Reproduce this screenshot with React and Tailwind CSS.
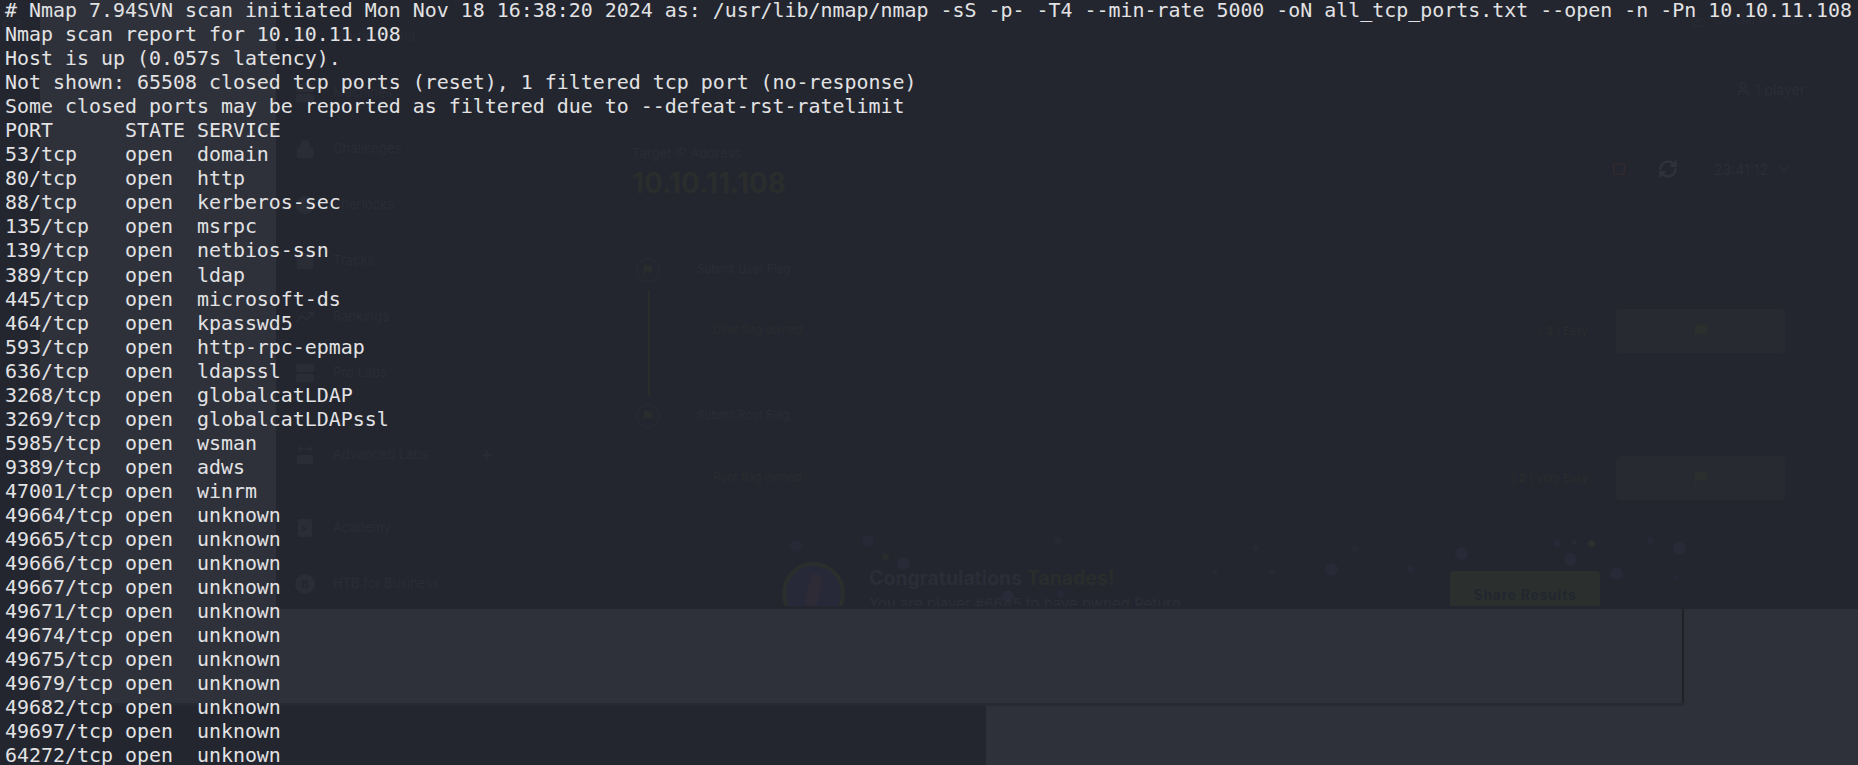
import React from 'react';
import { ChevronDown, Circle, Download, Flag, Lock, Plus, RefreshCw, Server, Square, TrendingUp, User } from 'lucide-react';

const header = [
    '# Nmap 7.94SVN scan initiated Mon Nov 18 16:38:20 2024 as: /usr/lib/nmap/nmap -sS -p- -T4 --min-rate 5000 -oN all_tcp_ports.txt --open -n -Pn 10.10.11.108',
    'Nmap scan report for 10.10.11.108',
    'Host is up (0.057s latency).',
    'Not shown: 65508 closed tcp ports (reset), 1 filtered tcp port (no-response)',
    'Some closed ports may be reported as filtered due to --defeat-rst-ratelimit',
    'PORT      STATE SERVICE',
];

const ports = [
    ['53', 'domain'], ['80', 'http'], ['88', 'kerberos-sec'], ['135', 'msrpc'], ['139', 'netbios-ssn'],
    ['389', 'ldap'], ['445', 'microsoft-ds'], ['464', 'kpasswd5'], ['593', 'http-rpc-epmap'], ['636', 'ldapssl'],
    ['3268', 'globalcatLDAP'], ['3269', 'globalcatLDAPssl'], ['5985', 'wsman'], ['9389', 'adws'], ['47001', 'winrm'],
    ['49664', 'unknown'], ['49665', 'unknown'], ['49666', 'unknown'], ['49667', 'unknown'], ['49671', 'unknown'],
    ['49674', 'unknown'], ['49675', 'unknown'], ['49679', 'unknown'], ['49682', 'unknown'], ['49697', 'unknown'],
    ['64272', 'unknown'],
];

const lines = [...header, ...ports.map(([port, name]) => `${(port + '/tcp').padEnd(9)} open  ${name}`)];

const navTop = [
    { label: 'Starting Point', icon: Flag },
    { label: 'Machines', icon: Server },
    { label: 'Challenges', icon: Lock },
    { label: 'Sherlocks', icon: Circle },
    { label: 'Tracks', icon: Square },
    { label: 'Rankings', icon: TrendingUp, outline: true },
    { label: 'Pro Labs', icon: Server },
];

// confetti pieces, x and y are relative to the congratulations row
const confetti = [
    [164, 26, 12, '#272936'], [236, 21, 12, '#272936'], [253, 36, 7, '#292c2d'], [271, 43, 13, '#282a38'],
    [375, 76, 13, '#282a38'], [428, 74, 7, '#272936'], [426, 21, 8, '#262834'], [623, 27, 7, '#262834'],
    [722, 28, 7, '#262834'], [699, 49, 13, '#282a38'], [778, 49, 7, '#272936'], [640, 52, 6, '#262834'],
    [583, 52, 5, '#262834'], [829, 33, 13, '#282a38'], [925, 23, 7, '#282a38'], [942, 22, 5, '#282a38'],
    [959, 23, 7, '#2c302e'], [938, 39, 13, '#282a38'], [984, 53, 13, '#282a38'], [1018, 20, 7, '#272936'],
    [1047, 28, 13, '#282a38'], [1043, 57, 5, '#272936'],
];

const FlagStep = ({ title, owned, points, level, first }) => (
    <div>
        <div className="flex h-6 items-center">
            <div className="ml-1 flex h-6 w-6 items-center justify-center rounded-full border border-[#292c32]">
                <Flag className="h-3 w-3 fill-[#2a2d2d] text-[#2a2d2d]" />
            </div>
            <span className="ml-[37px] text-[11.5px] text-[#2a2c37]">{title}</span>
        </div>
        <div className="flex">
            <div className="ml-[16px] w-[2px]">
                {first && <div className="my-2 h-[106px] w-[2px] bg-[#2a2d2c]" />}
            </div>
            <div className={first ? 'ml-[63px] mt-[27px] flex h-[44px] flex-1 items-center pr-[73px]' : 'ml-[63px] mt-[28px] flex h-[44px] flex-1 items-center pr-[73px]'}>
                <span className="text-[11.5px] text-[#2a2c2e]">{owned}</span>
                <span className="ml-auto text-[11px] text-[#2a2d2c]">[ <b>{points}</b> ] {level}</span>
                <div className="ml-[28px] flex h-[44px] w-[169px] items-center justify-center rounded bg-[#272a31]">
                    <Flag className="h-4 w-4 fill-[#2b2f2d] text-[#2b2f2d]" />
                </div>
            </div>
        </div>
    </div>
);

export default function App() {
    return (
        <div className="relative flex h-[765px] w-[1858px] flex-col overflow-hidden bg-[#2e313a] font-['Inter',sans-serif]">
            {/* dimmed browser page behind the terminal */}
            <div className="flex h-[609px]">
                <div className="w-[40px] bg-[#23262f] pl-[2px] pt-[15px] text-[14px] text-[#292b35]">6.3</div>
                <div className="w-[236px]" />
                <div className="flex flex-1 bg-[#23262f]">
                    <nav className="w-[356px] pl-[19px] pt-[9px] text-[13px] text-[#2a2c36]">
                        {navTop.map(({ label, icon: Icon, outline }) => (
                            <div key={label} className="flex h-14 items-center">
                                <Icon className={outline ? 'h-5 w-5 text-[#2a2c36]' : 'h-5 w-5 fill-[#2a2c36] text-[#2a2c36]'} />
                                <span className="ml-[18px]">{label}</span>
                            </div>
                        ))}
                        <div className="mt-[26px] flex h-14 items-center">
                            <svg className="h-5 w-5" viewBox="0 0 20 20" fill="currentColor">
                                <path d="M3 4h14M3 4l3-2.5M3 4l3 2.5M17 4l-3-2.5M17 4l-3 2.5" stroke="currentColor" strokeWidth="1.6" fill="none" />
                                <rect x="2" y="10" width="16" height="9" rx="1.5" />
                            </svg>
                            <span className="ml-[18px]">Advanced Labs</span>
                            <Plus className="ml-[51px] h-4 w-4" />
                        </div>
                        <div className="mt-[17px] flex h-14 items-center">
                            <svg className="h-5 w-5" viewBox="0 0 20 20" fill="currentColor">
                                <rect x="3" y="1" width="14" height="18" rx="2" />
                                <path d="M7 8l3 2.5L7 13" stroke="#23262f" strokeWidth="1.5" fill="none" />
                            </svg>
                            <span className="ml-[18px]">Academy</span>
                        </div>
                        <div className="flex h-14 items-center">
                            <div className="flex h-5 w-5 items-center justify-center rounded-full bg-[#2a2c36] text-[10px] font-bold text-[#23262f]">B</div>
                            <span className="ml-[18px]">HTB for Business</span>
                        </div>
                    </nav>

                    <main className="flex-1">
                        <div className="flex h-10 items-center justify-end pr-[56px] text-[12px] text-[#282a34]">
                            <Download className="mr-2 h-4 w-4" />
                            Official Writeup
                        </div>
                        <div className="mt-[29px] flex h-10 items-center justify-end pr-[53px] text-[14px] text-[#2b2d37]">
                            <User className="mr-1 h-4 w-4" />
                            1 player
                        </div>
                        <div className="mt-[31px] flex h-[58px] items-center">
                            <div>
                                <div className="flex h-7 items-center text-[13px] text-[#2a2c36]">Target IP Address</div>
                                <div className="flex h-[30px] items-center text-[28px] font-bold text-[#2a2d2c]">10.10.11.108</div>
                            </div>
                            <Square className="ml-auto h-[14px] w-[14px] text-[#3a2a2f]" />
                            <RefreshCw className="ml-[32px] h-5 w-5 text-[#2f323a]" strokeWidth={3} />
                            <span className="ml-[36px] text-[14px] text-[#2b2d37]">23:41:12</span>
                            <ChevronDown className="ml-2 mr-[66px] h-4 w-4 text-[#2b2d37]" />
                        </div>
                        <div className="mt-[60px]">
                            <FlagStep title="Submit User Flag" owned="User flag owned" points="3" level="Easy" first />
                            <FlagStep title="Submit Root Flag" owned="Root flag owned" points="2" level="Very Easy" />
                        </div>
                        <div className="relative mt-[20px] flex h-[86px] overflow-hidden pl-[150px] pt-[42px]">
                            {confetti.map(([x, y, size, color], i) => (
                                <span
                                    key={i}
                                    className="absolute rounded-full"
                                    style={{ left: x - size / 2, top: y - size / 2, width: size, height: size, background: color }}
                                />
                            ))}
                            <div className="relative h-[63px] w-[63px] shrink-0 rounded-full border-[4px] border-[#2a2e2c] bg-[#282938]">
                                <div className="mx-auto mt-2 h-8 w-3 rotate-12 rounded bg-[#2f2b36]" />
                            </div>
                            <div className="relative ml-6">
                                <div className="mt-[2px] flex h-7 items-center text-[19.5px] font-bold leading-7 text-[#2b2d37]">
                                    Congratulations&nbsp;<span className="text-[#2a2d2c]">Tanades!</span>
                                </div>
                                <div className="mt-[2px] text-[15px] leading-5 text-[#2c2e38]">You are player #6645 to have pwned Return</div>
                            </div>
                            <div className="relative ml-auto mr-[258px] mt-[9px] flex h-[50px] w-[150px] justify-center rounded bg-[#2b302e] pt-[13px] text-[14px] font-bold tracking-wider text-[#23262f]">
                                Share Results
                            </div>
                        </div>
                    </main>
                </div>
            </div>

            <div className="flex h-[94px]">
                <div className="w-[40px] bg-[#23262f]" />
                <div className="relative w-[1644px] border-r-2 border-[#1f2229] shadow-[0_3px_0_#272a33]" />
            </div>

            <div className="flex flex-1">
                <div className="w-[986px] bg-[#23262f]" />
            </div>

            {/* terminal floats on top of the page */}
            <pre className="absolute inset-x-0 -top-px pl-[5px] font-['DejaVu_Sans_Mono',monospace] text-[19.93px] leading-[24.04px] text-[#e2e2e4]">
                {lines.join('\n')}
            </pre>
        </div>
    );
}
